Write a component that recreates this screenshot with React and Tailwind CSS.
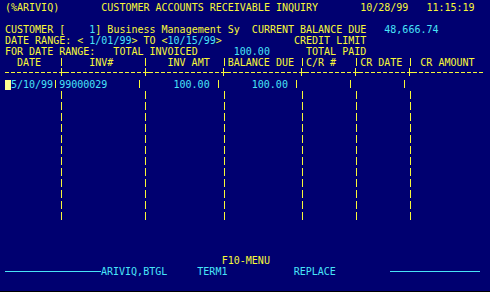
const YEL = 'text-[#f8f838]';
const CYN = 'text-[#48e4f8]';

const Y = ({ children }) => <span className={YEL}>{children}</span>;
const C = ({ children }) => <span className={CYN}>{children}</span>;

const Row = ({ children }) => (
  <div className="flex h-[11px] whitespace-pre leading-[11px]">{children}</div>
);

// vertical column separator, one char cell wide
const Bar = () => (
  <span className="flex h-[11px] w-[6px] shrink-0 pl-[2px]">
    <span className="mt-[1px] h-[8px] w-[1px] bg-[#f8f838]" />
  </span>
);

const Dash = () => (
  <span className="h-[11px] w-[6px] shrink-0">
    <span className="mt-[4px] block h-[1px] w-[4px] bg-[#f8f838]" />
  </span>
);

const Plus = () => (
  <svg width="6" height="11" viewBox="0 0 6 11" className="shrink-0">
    <rect x="0" y="4" width="6" height="1" fill="#f8f838" />
    <rect x="2" y="0" width="1" height="8" fill="#f8f838" />
  </svg>
);

const widths = [9, 13, 12, 12, 8, 8, 12];

const TableRow = ({ cells = [] }) => (
  <Row>
    {widths.map((w, i) => (
      <span key={i} className="flex">
        {i > 0 && <Bar />}
        <span>{cells[i] ?? ' '.repeat(w)}</span>
      </span>
    ))}
  </Row>
);

const DashRow = () => (
  <Row>
    {widths.map((w, i) => (
      <span key={i} className="flex">
        {i > 0 && <Plus />}
        {Array.from({ length: w }).map((_, j) => (
          <Dash key={j} />
        ))}
      </span>
    ))}
  </Row>
);

const Blank = () => <Row> </Row>;

export default function App() {
  return (
    <div className="h-[292px] w-[490px] bg-black font-['DejaVu_Sans_Mono',monospace] text-[10px]">
      <div className="h-[291px] bg-[#000070] pl-[5px] pt-[2px]">
        <Row>
          <Y>{'(%ARIVIQ)       CUSTOMER ACCOUNTS RECEIVABLE INQUIRY       10/28/99   11:15:19'}</Y>
        </Row>
        <Blank />
        <Row>
          <Y>{'CUSTOMER [    '}</Y>
          <C>1</C>
          <Y>{'] Business Management Sy  CURRENT BALANCE DUE   '}</Y>
          <C>48,666.74</C>
        </Row>
        <Row>
          <Y>{'DATE RANGE: < '}</Y>
          <C>1/01/99</C>
          <Y>{'> TO <'}</Y>
          <C>10/15/99</C>
          <Y>{'>            CREDIT LIMIT'}</Y>
        </Row>
        <Row>
          <Y>{'FOR DATE RANGE:   TOTAL INVOICED      '}</Y>
          <C>100.00</C>
          <Y>{'      TOTAL PAID'}</Y>
        </Row>
        <TableRow
          cells={[
            <Y>{'  DATE   '}</Y>,
            <Y>{'    INV#     '}</Y>,
            <Y>{'   INV AMT  '}</Y>,
            <Y>{'BALANCE DUE '}</Y>,
            <Y>{'C/R #   '}</Y>,
            <Y>{'CR DATE '}</Y>,
            <Y>{' CR AMOUNT  '}</Y>,
          ]}
        />
        <DashRow />
        <TableRow
          cells={[
            <span className="flex">
              {' '}
              <span className="mt-[1px] h-[10px] w-[6px] bg-[#ffff90]" />
              <C>5/10/99</C>
            </span>,
            <C>{'99000029     '}</C>,
            <C>{'     100.00 '}</C>,
            <C>{'     100.00 '}</C>,
          ]}
        />
        {Array.from({ length: 12 }).map((_, i) => (
          <TableRow key={i} />
        ))}
        <Blank />
        <Blank />
        <Blank />
        <Row>
          <Y>{'                                    F10-MENU'}</Y>
        </Row>
        <Row>
          <span className="w-[96px] shrink-0">
            <span className="mt-[5px] block h-[1px] w-[96px] bg-[#48e4f8]" />
          </span>
          <C>{'ARIVIQ,BTGL     TERM1           REPLACE         '}</C>
          <span className="w-[90px] shrink-0">
            <span className="mt-[5px] block h-[1px] w-[90px] bg-[#48e4f8]" />
          </span>
        </Row>
      </div>
    </div>
  );
}
